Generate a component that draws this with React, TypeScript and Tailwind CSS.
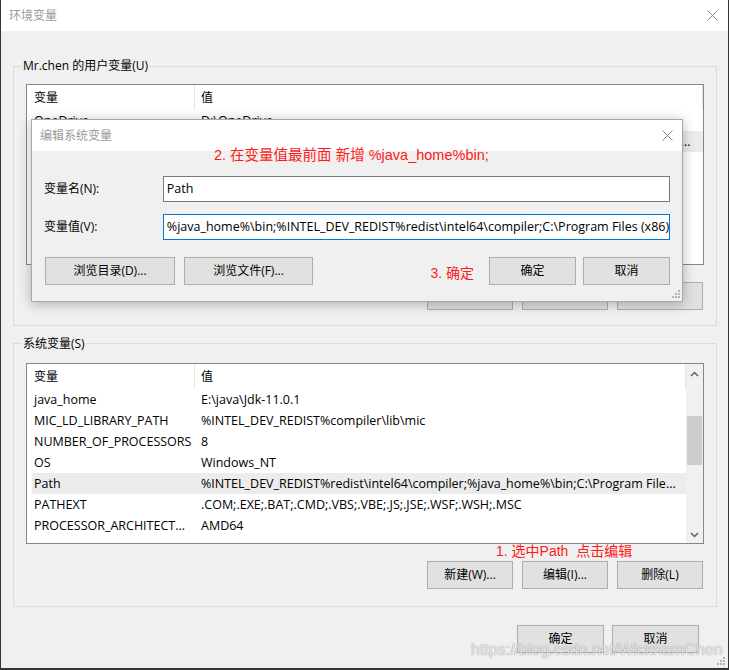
import React from "react";

type Row = [string, string];

const userVars: Row[] = [
  ["OneDrive", "D:\\OneDrive"],
  ["Path", "C:\\Users\\Mr.chen\\AppData\\Local\\Microsoft\\WindowsApps;D:\\Microsoft VS Code\\bin;C:\\Users\\Mr.chen\\AppData\\Local\\Programs"],
  ["TEMP", "C:\\Users\\Mr.chen\\AppData\\Local\\Temp"],
  ["TMP", "C:\\Users\\Mr.chen\\AppData\\Local\\Temp"],
];

const sysVars: Row[] = [
  ["java_home", "E:\\java\\Jdk-11.0.1"],
  ["MIC_LD_LIBRARY_PATH", "%INTEL_DEV_REDIST%compiler\\lib\\mic"],
  ["NUMBER_OF_PROCESSORS", "8"],
  ["OS", "Windows_NT"],
  ["Path", "%INTEL_DEV_REDIST%redist\\intel64\\compiler;%java_home%\\bin;C:\\Program File..."],
  ["PATHEXT", ".COM;.EXE;.BAT;.CMD;.VBS;.VBE;.JS;.JSE;.WSF;.WSH;.MSC"],
  ["PROCESSOR_ARCHITECT...", "AMD64"],
  ["", ""],
];

function Btn({ children, className = "" }: { children: React.ReactNode; className?: string }) {
  return (
    <div
      className={`h-[28px] flex items-center justify-center bg-[#e1e1e1] border border-[#adadad] text-[12px] text-black ${className}`}
    >
      {children}
    </div>
  );
}

function CloseIcon() {
  return (
    <svg width="11" height="11" viewBox="0 0 11 11" className="text-[#8a8a8a]">
      <path d="M0.5 0.5 L10.5 10.5 M10.5 0.5 L0.5 10.5" stroke="currentColor" strokeWidth="1" />
    </svg>
  );
}

function Grip() {
  const dots = [
    [6, 0],
    [3, 3],
    [6, 3],
    [0, 6],
    [3, 6],
    [6, 6],
  ];
  return (
    <svg width="8" height="8" viewBox="0 0 8 8">
      {dots.map(([x, y]) => (
        <rect key={`${x}-${y}`} x={x} y={y} width="2" height="2" fill="#b4b4b4" />
      ))}
    </svg>
  );
}

function Chevron({ down }: { down?: boolean }) {
  return (
    <svg width="9" height="6" viewBox="0 0 9 6">
      <polyline
        points={down ? "1,1 4.5,4.5 8,1" : "1,5 4.5,1.5 8,5"}
        fill="none"
        stroke="#606060"
        strokeWidth="1.5"
      />
    </svg>
  );
}

// list view with the 变量 / 值 columns
function VarList({ rows, selected, scrollbar }: { rows: Row[]; selected: number; scrollbar?: boolean }) {
  return (
    <div className="w-[678px] h-[181px] border border-[#828790] bg-white flex overflow-hidden">
      <div className="flex-1 min-w-0">
        <div className="h-[25px] flex items-center text-[12px]">
          <div className="w-[168px] h-full flex items-center pl-[7px] border-r border-[#e5e5e5]">变量</div>
          <div className="flex-1 pl-[6px]">值</div>
          <div className="w-[1px] h-full bg-[#e5e5e5]" />
        </div>
        {rows.map(([name, value], i) => (
          <div
            key={i}
            className={`h-[21px] ml-[5px] pt-[2px] flex items-center text-[12.5px] text-black ${i === selected ? "bg-[#ececec]" : ""}`}
          >
            <div className="w-[163px] pl-[2px] whitespace-nowrap overflow-hidden">{name}</div>
            <div className="flex-1 min-w-0 pl-[6px] pr-[9px] whitespace-nowrap overflow-hidden text-ellipsis">{value}</div>
          </div>
        ))}
      </div>
      {scrollbar && (
        <div className="w-[17px] h-full bg-[#f0f0f0] flex flex-col">
          <div className="h-[17px] pt-[2px] flex items-center justify-center">
            <Chevron />
          </div>
          <div className="flex-1">
            <div className="mt-[35px] h-[49px] w-[15px] mx-auto bg-[#cdcdcd]" />
          </div>
          <div className="h-[17px] flex items-center justify-center">
            <Chevron down />
          </div>
        </div>
      )}
    </div>
  );
}

function GroupButtons() {
  return (
    <div className="w-[677px] mt-[17px] flex justify-end gap-[9px]">
      <Btn className="w-[86px]">新建(W)...</Btn>
      <Btn className="w-[86px]">编辑(I)...</Btn>
      <Btn className="w-[86px]">删除(L)</Btn>
    </div>
  );
}

export default function App() {
  return (
    <div className="relative w-[729px] h-[670px] bg-[#343434] overflow-hidden font-['Open_Sans','Noto_Sans_CJK_SC',sans-serif]">
      {/* main window: 环境变量 */}
      <div className="ml-[1px] w-[727px] h-[668px] flex flex-col bg-[#f0f0f0]">
        <div className="h-[31px] bg-white flex items-center justify-between pl-[8px] pr-[10px]">
          <span className="text-[12px] text-[#9a9a9a]">环境变量</span>
          <CloseIcon />
        </div>

        <div className="flex-1 pl-[12px] pt-[35px]">
          <div className="relative w-[704px] h-[260px] border border-[#dcdcdc] pt-[17px] pl-[12px]">
            <span className="absolute left-[8px] -top-[10px] leading-[18px] px-[1px] bg-[#f0f0f0] text-[12px] text-black">
              Mr.chen 的用户变量(U)
            </span>
            <VarList rows={userVars} selected={1} />
            <GroupButtons />
          </div>

          <div className="relative mt-[17px] w-[704px] h-[264px] border border-[#dcdcdc] pt-[19px] pl-[12px]">
            <span className="absolute left-[8px] -top-[9px] leading-[18px] px-[1px] bg-[#f0f0f0] text-[12px] text-black">
              系统变量(S)
            </span>
            <VarList rows={sysVars} selected={4} scrollbar />
            <GroupButtons />
            <span className="absolute left-[482px] top-[199px] leading-[16px] text-[14px] text-[#ff1a1a] whitespace-nowrap font-['Liberation_Sans','Noto_Sans_CJK_SC',sans-serif]">
              1. 选中Path&nbsp;&nbsp;点击编辑
            </span>
          </div>

          <div className="mt-[18px] pr-[29px] flex justify-end gap-[8px]">
            <Btn className="w-[87px]">确定</Btn>
            <Btn className="w-[87px]">取消</Btn>
          </div>
        </div>
      </div>

      <div className="absolute right-[4px] bottom-[5px]">
        <Grip />
      </div>

      {/* watermark */}
      <span className="absolute left-[471px] top-[640px] text-[16px] leading-[20px] text-white/80 font-['Liberation_Sans',sans-serif] [text-shadow:0_0_1px_rgba(0,0,0,0.55)] whitespace-nowrap">
        https://blog.csdn.net/WickhamChen
      </span>

      {/* 编辑系统变量 dialog */}
      <div className="absolute left-[31px] top-[119px] w-[652px] h-[183px] bg-[#f0f0f0] border border-[#a8a8a8] shadow-[0_2px_12px_rgba(0,0,0,0.28)] flex flex-col">
        <div className="h-[31px] shrink-0 bg-white flex items-center justify-between pl-[8px] pr-[9px]">
          <span className="text-[12px] text-[#9a9a9a]">编辑系统变量</span>
          <CloseIcon />
        </div>

        <span className="absolute left-[182px] top-[27px] leading-[16px] text-[14.5px] text-[#ff1a1a] whitespace-nowrap font-['Liberation_Sans','Noto_Sans_CJK_SC',sans-serif]">
          2. 在变量值最前面 新增 %java_home%bin;
        </span>

        <div className="pl-[12px] pr-[12px] pt-[25px] flex flex-col gap-[12px] text-[12px] text-black">
          <div className="flex items-center">
            <div className="w-[119px]">变量名(N):</div>
            <div className="w-[508px] h-[26px] bg-white border border-[#7a7a7a] flex items-center pl-[3px] text-[12.5px]">Path</div>
          </div>
          <div className="flex items-center">
            <div className="w-[119px]">变量值(V):</div>
            <div className="w-[508px] h-[26px] bg-white border border-[#0078d7] flex items-center pl-[3px] whitespace-nowrap overflow-hidden text-[12.5px]">
              %java_home%\bin;%INTEL_DEV_REDIST%redist\intel64\compiler;C:\Program Files (x86)\Common Files\Oracle\Java\javapath
            </div>
          </div>
        </div>

        <div className="mt-[17px] pl-[13px] pr-[12px] flex items-center">
          <Btn className="w-[130px]">浏览目录(D)...</Btn>
          <Btn className="w-[129px] ml-[9px]">浏览文件(F)...</Btn>
          <span className="ml-auto mr-[15px] text-[14px] text-[#ff1a1a] mt-[5px] font-['Liberation_Sans','Noto_Sans_CJK_SC',sans-serif]">3. 确定</span>
          <Btn className="w-[87px]">确定</Btn>
          <Btn className="w-[87px] ml-[7px]">取消</Btn>
        </div>

        <div className="absolute right-[2px] bottom-[3px]">
          <Grip />
        </div>
      </div>
    </div>
  );
}
